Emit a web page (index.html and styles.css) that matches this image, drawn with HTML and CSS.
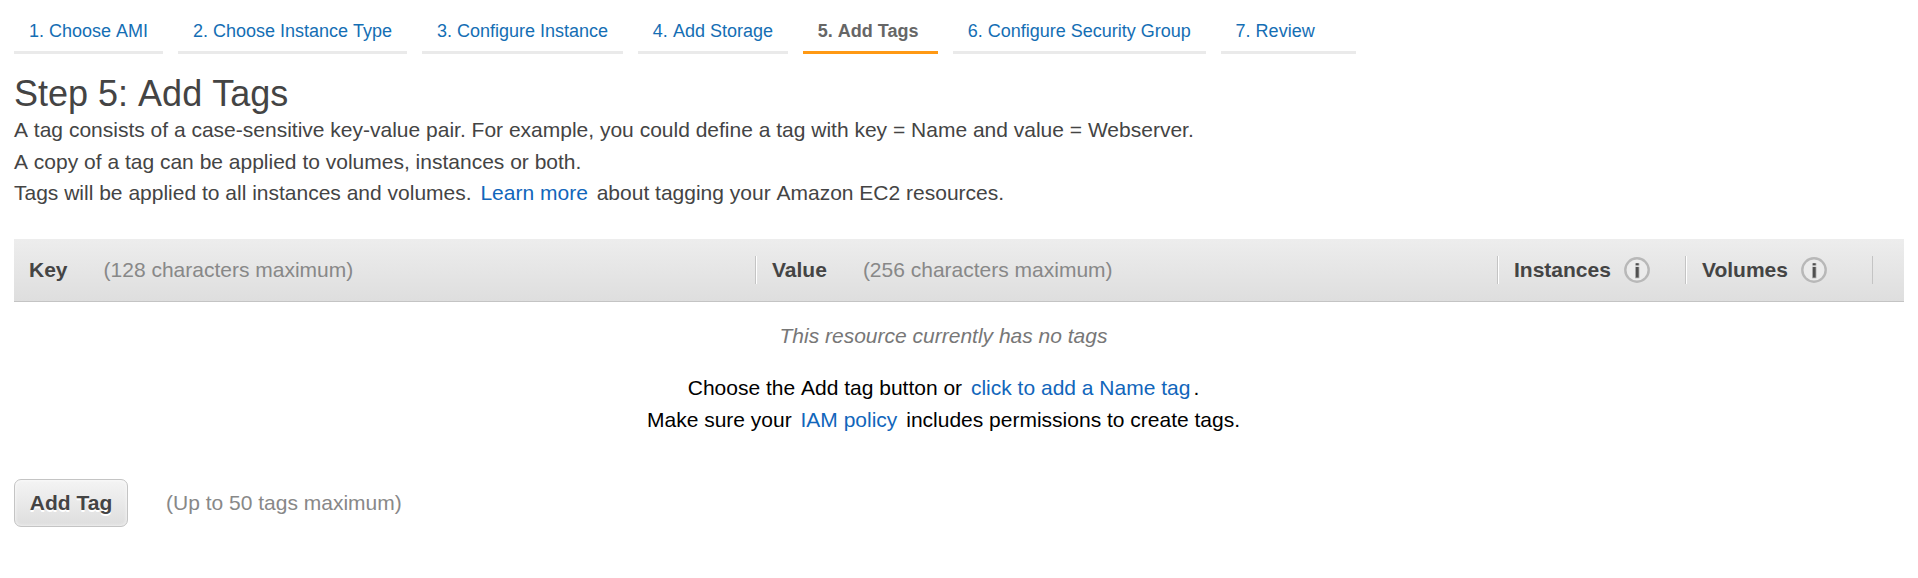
FILE: index.html
```html
<!DOCTYPE html>
<html lang="en">
<head>
<meta charset="utf-8">
<title>Step 5: Add Tags</title>
<link rel="stylesheet" href="styles.css">
</head>
<body>
<nav class="steps">
  <a class="step">1. Choose <span class="word">AMI</span></a>
  <a class="step">2. Choose Instance <span class="word">Type</span></a>
  <a class="step">3. Configure Instance</a>
  <a class="step">4. <span class="word">Add Storage</span></a>
  <a class="step active">5. <span class="word">Add</span> <span class="word">Tags</span></a>
  <a class="step">6. Configure Security Group</a>
  <a class="step">7. Review</a>
</nav>
<main>
  <h1>Step 5: <span class="word">Add</span> <span class="word">Tags</span></h1>
  <div class="intro">
    <p><span class="word">A</span> tag consists of a case-sensitive key-value pair. For example, you could define a tag with key = Name and value = Webserver.</p>
    <p><span class="word">A</span> copy of a tag can be applied to volumes, instances or both.</p>
    <p>Tags will be applied to all instances and volumes. <a class="link">Learn more</a> about tagging your <span class="word">Amazon</span> EC2 resources.</p>
  </div>
  <div class="thead">
    <div class="th"><b>Key</b><span class="hint">(128 characters maximum)</span></div>
    <div class="th"><b>Value</b><span class="hint">(256 characters maximum)</span></div>
    <div class="th"><b>Instances</b>
      <svg class="info" viewBox="0 0 26 26"><circle cx="13" cy="13" r="11.7" fill="#ebebeb" stroke="#b8b8b8" stroke-width="2.4"/><path d="M11 6.2h4.4v2.4H11zM11 9.8h4.4v11.4H11z" fill="#a8a8a8"/><path d="M12 6.2h2.6v2H12zM12 10h2.6v10.6H12z" fill="#505050"/></svg>
    </div>
    <div class="th"><b>Volumes</b>
      <svg class="info" viewBox="0 0 26 26"><circle cx="13" cy="13" r="11.7" fill="#ebebeb" stroke="#b8b8b8" stroke-width="2.4"/><path d="M11 6.2h4.4v2.4H11zM11 9.8h4.4v11.4H11z" fill="#a8a8a8"/><path d="M12 6.2h2.6v2H12zM12 10h2.6v10.6H12z" fill="#505050"/></svg>
    </div>
    <div class="th last"></div>
  </div>
  <div class="empty">
    <p class="none">This resource currently has no tags</p>
    <p>Choose the <span class="word">Add</span> tag button or <a class="link">click to add a Name tag</a>.</p>
    <p>Make sure your <a class="link">IAM policy</a> includes permissions to create tags.</p>
  </div>
  <div class="actions">
    <button class="add">Add Tag</button>
    <span class="hint">(Up to 50 tags maximum)</span>
  </div>
</main>
</body>
</html>
```
FILE: styles.css
```css
* { box-sizing: border-box; }
body {
  margin: 0;
  padding: 0 14px;
  background: #fff;
  color: #444;
  font: 21px/32px "Liberation Sans", Arial, sans-serif;
}
h1, p { margin: 0; }
/* keeps capitals from kerning into the neighbouring space */
.word { display: inline-block; }
.steps { display: flex; gap: 14.85px; padding-top: 15px; }
.step {
  min-width: 135px;
  height: 39px;
  padding: 0 15px;
  border-bottom: 3px solid #eaeaea;
  color: #146eb4;
  font-size: 18px;
  line-height: 32px;
  white-space: nowrap;
}
.step.active { border-color: #ff9914; color: #666; font-weight: bold; }
h1 { margin-top: 20px; font-size: 36px; font-weight: normal; line-height: 40px; }
.intro { height: 125px; line-height: 31.5px; }
.link { padding: 0 3px; color: #1166bb; }
.thead {
  display: grid;
  grid-template-columns: 741px 742px 188px 187px 1fr;
  align-items: center;
  height: 63px;
  border-bottom: 1px solid #c4c4c4;
  background: linear-gradient(#ededed, #dedede);
}
.th {
  display: flex;
  align-items: center;
  height: 28px;
  padding-left: 16px;
  border-left: 1px solid #c4c4c4;
  box-shadow: inset 1px 0 #fff;
}
.th:first-child { padding-left: 15px; border: 0; box-shadow: none; }
.th.last { box-shadow: none; }
.hint { color: #888; }
.th .hint { margin-left: 36px; }
.info { width: 26px; height: 26px; margin-left: 13px; }
.empty { padding: 18px 31px 0 0; color: #000; text-align: center; }
.none { margin-bottom: 20px; color: #777; font-style: italic; }
.actions { display: flex; align-items: center; gap: 38px; margin-top: 43px; }
.add {
  width: 114px;
  height: 48px;
  padding: 0;
  border: 1px solid #c4c4c4;
  border-radius: 7px;
  background: linear-gradient(#f4f4f4, #dedede);
  box-shadow: inset 0 0 3px 1px rgba(255, 255, 255, .5);
  color: #444;
  font: bold 21px "Liberation Sans", Arial, sans-serif;
  text-shadow: 0 2px 0 #fff;
}
```
